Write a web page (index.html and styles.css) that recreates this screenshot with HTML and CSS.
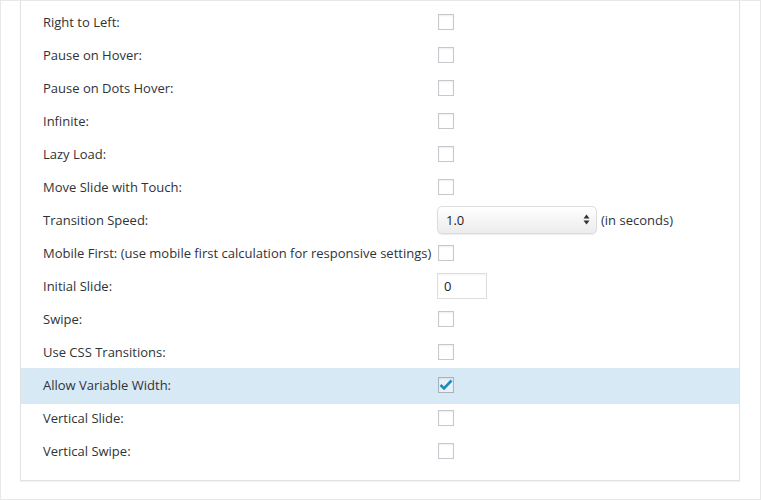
FILE: index.html
```html
<!DOCTYPE html>
<html>
<head>
<meta charset="utf-8">
<link rel="stylesheet" href="styles.css">
</head>
<body>
<div class="frame">
  <div class="panel">
    <div class="row"><div class="label">Right to Left:</div><div class="field"><span class="cb"></span></div></div>
    <div class="row"><div class="label">Pause on Hover:</div><div class="field"><span class="cb"></span></div></div>
    <div class="row"><div class="label">Pause on Dots Hover:</div><div class="field"><span class="cb"></span></div></div>
    <div class="row"><div class="label">Infinite:</div><div class="field"><span class="cb"></span></div></div>
    <div class="row"><div class="label">Lazy Load:</div><div class="field"><span class="cb"></span></div></div>
    <div class="row"><div class="label">Move Slide with Touch:</div><div class="field"><span class="cb"></span></div></div>
    <div class="row"><div class="label">Transition Speed:</div><div class="field"><div class="select"><span>1.0</span><svg class="arrows" width="7" height="11" viewBox="0 0 7 11"><path d="M3.5 0.5 L6.5 4.5 H0.5 Z M3.5 10.5 L6.5 6.5 H0.5 Z" fill="#333"/></svg></div><span class="unit">(in seconds)</span></div></div>
    <div class="row"><div class="label">Mobile First: (use mobile first calculation for responsive settings)</div><div class="field"><span class="cb"></span></div></div>
    <div class="row"><div class="label">Initial Slide:</div><div class="field"><div class="input">0</div></div></div>
    <div class="row"><div class="label">Swipe:</div><div class="field"><span class="cb"></span></div></div>
    <div class="row"><div class="label">Use CSS Transitions:</div><div class="field"><span class="cb"></span></div></div>
    <div class="row active"><div class="label">Allow Variable Width:</div><div class="field"><span class="cb checked"><svg width="14" height="12" viewBox="0 0 14 12"><path d="M1.5 6 L5 9.5 L12.5 1.5" stroke="#1e8cbe" stroke-width="2.6" fill="none"/></svg></span></div></div>
    <div class="row"><div class="label">Vertical Slide:</div><div class="field"><span class="cb"></span></div></div>
    <div class="row"><div class="label">Vertical Swipe:</div><div class="field"><span class="cb"></span></div></div>
  </div>
</div>
</body>
</html>
```
FILE: styles.css
```css
html, body {
  margin: 0;
  padding: 0;
  background: #fff;
}
body {
  font-family: "Open Sans", "Liberation Sans", sans-serif;
  font-size: 13px;
  color: #2f3337;
}
.frame {
  box-sizing: border-box;
  width: 761px;
  height: 500px;
  border: 1px solid #e8e8e8;
  padding: 0 20px 18px 19px;
}
.panel {
  box-sizing: border-box;
  width: 720px;
  height: 480px;
  border: 1px solid #e2e2e2;
  border-top: none;
  box-shadow: 0 1px 1px rgba(0,0,0,0.05);
  padding-top: 4px;
}
.row {
  display: flex;
  align-items: center;
  height: 33px;
}
.row.active {
  background: #d8e9f6;
  box-shadow: 0 3px 0 #d8e9f6;
  position: relative;
}
.label {
  width: 394px;
  padding-left: 22px;
  flex: none;
  white-space: nowrap;
}
.field {
  display: flex;
  align-items: center;
}
.cb {
  box-sizing: border-box;
  display: flex;
  align-items: center;
  justify-content: center;
  width: 16px;
  height: 16px;
  margin-left: 1px;
  border: 1px solid #c5c8cc;
  background: #fff;
  box-shadow: inset 0 1px 2px rgba(0,0,0,0.07);
}
.cb.checked {
  border-color: #a9b3bc;
  background: #e8f1f8;
}
.select {
  box-sizing: border-box;
  width: 160px;
  height: 28px;
  border: 1px solid #dcdcdc;
  border-radius: 5px;
  background: linear-gradient(#ffffff, #ececec);
  box-shadow: 0 1px 1px rgba(0,0,0,0.08);
  display: flex;
  align-items: center;
  justify-content: space-between;
  padding: 0 6px 0 8px;
  color: #222;
}
.unit {
  margin-left: 4px;
}
.input {
  box-sizing: border-box;
  width: 50px;
  height: 26px;
  border: 1px solid #dddddd;
  box-shadow: inset 0 1px 2px rgba(0,0,0,0.05);
  padding-left: 6px;
  display: flex;
  align-items: center;
  color: #222;
}
```
